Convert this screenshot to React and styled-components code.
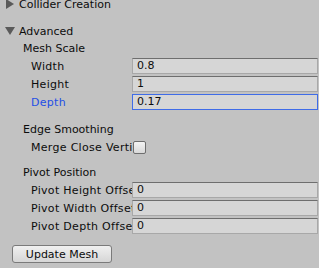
import React from "react";
import styled, { createGlobalStyle } from "styled-components";

const Global = createGlobalStyle`
  body {
    margin: 0;
    background: #c2c2c2;
    font-family: "DejaVu Sans", sans-serif;
    font-size: 11px;
    color: #0c0c0c;
  }
`;

const Panel = styled.div`
  width: 319px;
  height: 268px;
  overflow: hidden;
  margin-top: -5px;
`;

const Foldout = styled.div`
  display: flex;
  align-items: center;
  height: 18px;
  padding-left: 4px;
  margin-bottom: ${(p) => p.gap || 0}px;
`;

const Arrow = styled.span`
  width: 0;
  height: 0;
  margin-right: 4px;
  ${(p) =>
    p.open
      ? `border-left: 5px solid transparent; border-right: 5px solid transparent; border-top: 8px solid #5a5a5a; margin-left: 1px;`
      : `border-top: 5px solid transparent; border-bottom: 5px solid transparent; border-left: 8px solid #5a5a5a; margin-left: 2px; margin-right: 5px;`}
`;

const Header = styled.div`
  height: 18px;
  line-height: 18px;
  padding-left: ${(p) => p.indent}px;
  margin-top: ${(p) => p.top || 0}px;
`;

const Row = styled.div`
  display: flex;
  align-items: center;
  height: 16px;
  margin-bottom: 2px;
`;

const Label = styled.div`
  width: 101px;
  padding-left: 31px;
  white-space: nowrap;
  overflow: hidden;
  letter-spacing: 0.3px;
  color: ${(p) => (p.active ? "#1f4fe6" : "#0c0c0c")};
`;

const Field = styled.div`
  flex: 1;
  height: 14px;
  line-height: 14px;
  background: #d6d6d6;
  border: 1px solid #a8a8a8;
  border-top-color: #6e6e6e;
  padding-left: 4px;
  margin-right: 1px;
  ${(p) => p.active && "border-color: #3f6ce8;"}
`;

const Check = styled.div`
  width: 11px;
  height: 11px;
  margin-left: 1px;
  border: 1px solid #6e6e6e;
  border-radius: 2px;
  background: linear-gradient(#f4f4f4, #d8d8d8);
`;

const Button = styled.button`
  margin: 9px 0 0 12px;
  width: 100px;
  height: 18px;
  padding: 0;
  font-family: "DejaVu Sans", sans-serif;
  font-size: 11px;
  color: #0c0c0c;
  border: 1px solid #7a7a7a;
  border-radius: 3px;
  background: linear-gradient(#f0f0f0, #d6d6d6);
`;

const meshRows = [
  { label: "Width", value: "0.8" },
  { label: "Height", value: "1" },
  { label: "Depth", value: "0.17", active: true },
];

const pivotRows = [
  { label: "Pivot Height Offset", value: "0" },
  { label: "Pivot Width Offset", value: "0" },
  { label: "Pivot Depth Offset", value: "0" },
];

export default function App() {
  return (
    <>
      <Global />
      <Panel>
        <Foldout gap={9}>
          <Arrow />
          Collider Creation
        </Foldout>
        <Foldout>
          <Arrow open />
          Advanced
        </Foldout>
        <Header indent={23}>Mesh Scale</Header>
        {meshRows.map((r) => (
          <Row key={r.label}>
            <Label active={r.active}>{r.label}</Label>
            <Field active={r.active}>{r.value}</Field>
          </Row>
        ))}
        <Header indent={23} top={11}>
          Edge Smoothing
        </Header>
        <Row>
          <Label>Merge Close Vertices</Label>
          <Check />
        </Row>
        <Header indent={23} top={9}>
          Pivot Position
        </Header>
        {pivotRows.map((r) => (
          <Row key={r.label}>
            <Label>{r.label}</Label>
            <Field>{r.value}</Field>
          </Row>
        ))}
        <Button>Update Mesh</Button>
      </Panel>
    </>
  );
}
